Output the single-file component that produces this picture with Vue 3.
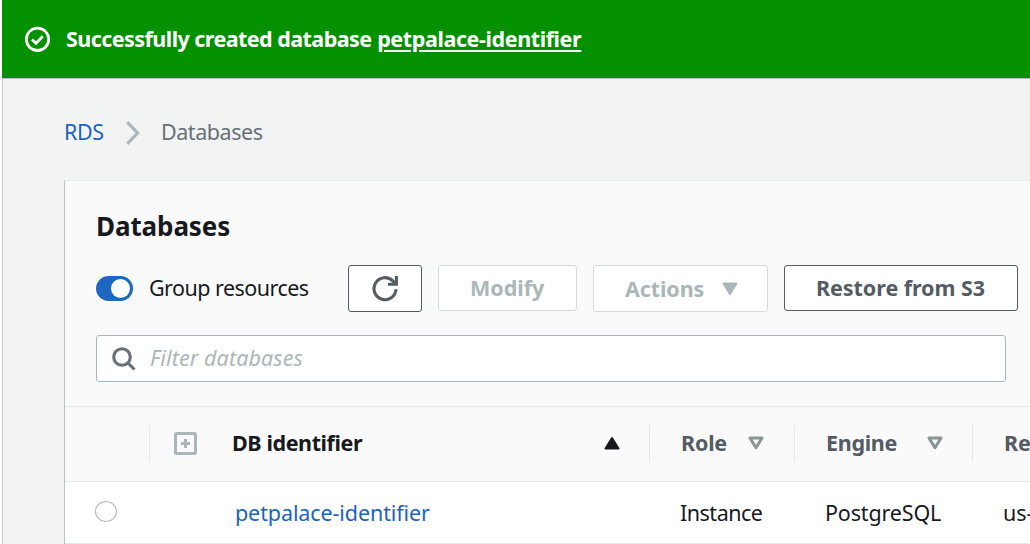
<script setup>
const columns = [
  { key: 'role', label: 'Role' },
  { key: 'engine', label: 'Engine' },
]
</script>

<template>
  <div class="page">
    <header class="banner">
      <svg class="check" width="26" height="26" viewBox="0 0 26 26" fill="none" stroke="#fff" stroke-width="2.8">
        <circle cx="12.5" cy="13.3" r="11.2" />
        <path d="M7 13.4l4 3.8 6.8-7" />
      </svg>
      <p class="flash"><span class="flash-copy">Successfully created database</span> <a class="flash-link">petpalace-identifier</a></p>
    </header>

    <main class="content">
      <nav class="crumbs">
        <a class="crumb-rds">RDS</a>
        <svg width="16" height="24" viewBox="0 0 16 24" fill="none" stroke="#aab7b8" stroke-width="3.2">
          <path d="M2.2 1.2L12.6 12 2.2 22.8" />
        </svg>
        <span class="crumb-current">Databases</span>
      </nav>

      <section class="card">
        <h1><span>Databases</span></h1>

        <div class="toolbar">
          <span class="toggle"><i></i></span>
          <span class="group">Group resources</span>
          <button class="btn refresh" aria-label="Refresh">
            <svg width="26" height="26" viewBox="0 0 26 26" fill="none" stroke="#545b64" stroke-width="3.1">
              <path d="M24 13.2A11 11 0 1 1 20.8 4.9L23.2 7.6" />
              <path d="M24.4 0V8.2H16" />
            </svg>
          </button>
          <button class="btn short off modify"><span>Modify</span></button>
          <button class="btn off actions">
            <span>Actions</span>
            <svg width="16" height="14" viewBox="0 0 16 14">
              <path d="M1.5 1.5h13L8 12z" fill="#aab7b8" stroke="#aab7b8" stroke-width="2" stroke-linejoin="round" />
            </svg>
          </button>
          <button class="btn short restore"><span>Restore from S3</span></button>
        </div>

        <div class="search">
          <svg width="24" height="24" viewBox="0 0 24 24" fill="none" stroke="#687078" stroke-width="3.1">
            <circle cx="10" cy="10" r="8.3" />
            <path d="M15.5 15.5l7 7" />
          </svg>
          <span class="placeholder">Filter databases</span>
        </div>

        <div class="row head">
          <div class="cell"></div>
          <div class="cell ident">
            <svg class="plus" width="23" height="23" viewBox="0 0 23 23" fill="none" stroke="#aab7b8">
              <rect x="1.5" y="1.5" width="20" height="20" rx="1" stroke-width="3" />
              <path d="M11.5 7v9M7 11.5h9" stroke-width="3" />
            </svg>
            <span class="h-id">DB identifier</span>
            <svg class="up" width="16" height="14" viewBox="0 0 16 14">
              <path d="M1.5 12.5h13L8 2z" fill="#16191f" stroke="#16191f" stroke-width="2" stroke-linejoin="round" />
            </svg>
          </div>
          <div v-for="c in columns" :key="c.key" class="cell" :class="c.key">
            <span :class="'h-' + c.key">{{ c.label }}</span>
            <svg class="down" width="16" height="14" viewBox="0 0 16 14">
              <path d="M2 2h12L8 11.8z" fill="none" stroke="#879596" stroke-width="3" stroke-linejoin="round" />
            </svg>
          </div>
          <div class="cell region"><span class="h-region">Region &amp; AZ</span></div>
        </div>

        <div class="row data">
          <div class="pick"><i class="radio"></i></div>
          <div class="d-id"><a>petpalace-identifier</a></div>
          <div class="d-role"><span>Instance</span></div>
          <div class="d-engine"><span>PostgreSQL</span></div>
          <div class="d-region"><span>us-east-1</span></div>
        </div>
      </section>
    </main>
  </div>
</template>

<style>
body {
  background: #fff;
  overflow: hidden;
}
</style>

<style scoped>
.page {
  box-sizing: border-box;
  width: 1030px;
  height: 544px;
  padding-left: 2px;
  overflow: hidden;
  font-family: "Noto Sans", "Open Sans", sans-serif;
  font-size: 21.5px;
  line-height: 30px;
  color: #16191f;
  white-space: nowrap;
}
.banner {
  display: flex;
  align-items: center;
  height: 78px;
  padding-left: 23px;
  color: #fff;
  background: #039100;
}
.check { margin-right: 15px; }
.flash { margin: 0; font-weight: 700; }
.flash-copy { letter-spacing: -0.55px; }
.flash-link { letter-spacing: -0.4px; text-decoration: underline; text-decoration-thickness: 2px; text-underline-offset: 3px; }
.content {
  box-sizing: border-box;
  height: 466px;
  padding-left: 61px;
  background: #f2f3f3;
  border-top: 1px solid #b5bfbe;
  border-left: 1px solid #c8cccc;
}
.crumbs {
  display: flex;
  align-items: center;
  height: 108px;
  box-sizing: border-box;
  padding: 0 0 2px;
  color: #687078;
}
.crumbs svg { margin: 2px 0 0; }
.crumb-rds { width: 61px; color: #1b63bb; letter-spacing: -0.4px; }
.crumb-current { margin-left: 20px; letter-spacing: -0.45px; }
.card {
  margin-top: -7px;
  height: 364px;
  background: #fafafa;
  border-left: 1px solid #bcc2c5;
  border-top: 1px solid #e8ebeb;
}
h1 {
  margin: 0;
  padding: 27px 0 0 31px;
  font-size: 26px;
  line-height: 36px;
  font-weight: 700;
  letter-spacing: -0.1px;
}
.toolbar {
  display: flex;
  height: 47px;
  margin-top: 21px;
  padding-left: 31px;
  align-items: flex-start;
}
.toggle {
  display: flex;
  box-sizing: border-box;
  width: 37px;
  height: 25px;
  margin-top: 11px;
  padding: 3px 2px 3px 15px;
  border-radius: 13px;
  background: #1f66c1;
}
.toggle i { width: 19px; height: 19px; border-radius: 50%; background: #fff; }
.group { width: 199px; flex: none; margin: 8px 0 0 16px; letter-spacing: -0.53px; }
.toggle { flex: none; }
.btn {
  display: flex;
  box-sizing: border-box;
  align-items: center;
  height: 47px;
  margin: 0 16px 0 0;
  padding: 0 0 0 31px;
  border: 1px solid #545b64;
  border-radius: 3px;
  background: #fff;
  color: #545b64;
  font: 700 21.5px/30px "Noto Sans", sans-serif;
  flex: none;
}
.short { height: 46px; }
.off { color: #aab7b8; border-color: #d5dbdb; }
.refresh { width: 74px; padding-left: 23px; }
.modify { width: 139px; }
.actions { width: 175px; }
.actions span { width: 97px; text-align: left; letter-spacing: -0.1px; }
.restore { width: 234px; letter-spacing: -0.05px; }
.search {
  display: flex;
  box-sizing: border-box;
  align-items: center;
  width: 910px;
  height: 47px;
  margin: 23px 0 24px 31px;
  padding-left: 15px;
  border: 1px solid #aab7b8;
  border-radius: 3px;
  background: #fff;
}
.placeholder { margin: -2px 0 0 14px; color: #aab7b8; font-style: italic; letter-spacing: 0.1px; }
.row {
  display: grid;
  grid-template-columns: 84px 500px 145px 178px 130px;
  box-sizing: border-box;
  border-top: 1px solid #e6e9e9;
}
.head { height: 75px; padding-top: 18px; font-weight: 700; color: #545b64; }
.cell { display: flex; align-items: center; height: 37px; box-sizing: border-box; }
.cell span { margin-top: -2px; }
.cell + .cell { border-left: 1px solid #e5e8e8; }
.ident { padding-left: 24px; color: #16191f; }
.h-id { width: 372px; margin-left: 35px; letter-spacing: -0.4px; }
.up { margin-top: -2px; }
.role, .engine, .region { padding-left: 31px; }
.h-role { width: 67px; letter-spacing: -0.2px; }
.h-engine { width: 101px; letter-spacing: -0.3px; }
.down { margin-top: -1px; }
.data { height: 63px; padding-top: 16px; background: #fff; border-bottom: 1px solid #e6e9e9; }
.pick { padding: 3px 0 0 30px; }
.radio { display: block; box-sizing: border-box; width: 22px; height: 21px; border: 1.5px solid #aab7b8; border-radius: 50%; }
.d-id { padding-left: 86px; color: #1b63bb; letter-spacing: -0.1px; }
.d-role, .d-engine, .d-region { padding-left: 31px; }
.d-role { letter-spacing: -0.5px; }
.d-engine { letter-spacing: -0.15px; }
</style>
